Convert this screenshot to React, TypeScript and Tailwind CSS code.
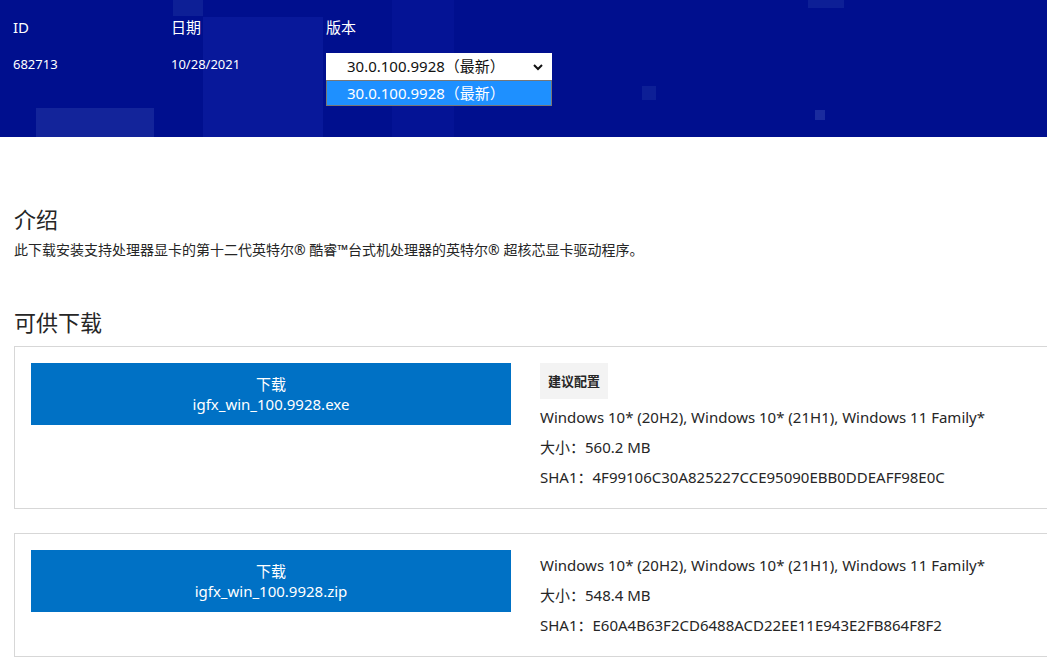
import React from "react";

const F = { fontFamily: '"Noto Sans","Noto Sans CJK SC",sans-serif' };

function Card({ file, rows, rec }: { file: string; rows: string[]; rec?: boolean }) {
  return (
    <div className="ml-[14px] w-[1100px] border border-[#d7d7d7] flex pt-4 pb-4 px-4">
      <div className="w-[480px] h-[62px] bg-[#0071c5] text-white text-[15px] leading-[20px] flex flex-col items-center justify-center shrink-0">
        <div>下载</div>
        <div>{file}</div>
      </div>
      <div className="ml-[29px] text-[15px] text-[#262626] leading-[30px]">
        {rec && (
          <div className="inline-block bg-[#f3f3f3] px-2 py-[3px] text-[13px] font-bold leading-[30px] mb-[3px]">建议配置</div>
        )}
        {rows.map((r) => (
          <div key={r}>{r}</div>
        ))}
      </div>
    </div>
  );
}

export default function App() {
  return (
    <div style={F} className="w-[1047px] h-[663px] overflow-hidden bg-white">
      <div className="relative h-[137px] bg-[#000f8e] text-white overflow-hidden">
        <div className="absolute left-[173px] top-0 w-[30px] h-[16px] bg-[#0d1f96]" />
        <div className="absolute left-[203px] top-[17px] w-[120px] h-[120px] bg-[#08189a]" />
        <div className="absolute left-[36px] top-[108px] w-[118px] h-[30px] bg-[#13249a]" />
        <div className="absolute left-[392px] top-0 w-[62px] h-[137px] bg-[#06169a] opacity-60" />
        <div className="absolute left-[808px] top-0 w-[36px] h-[8px] bg-[#0d1f96]" />
        <div className="absolute left-[642px] top-[86px] w-[14px] h-[14px] bg-[#0d1f96]" />
        <div className="absolute left-[815px] top-[110px] w-[10px] h-[10px] bg-[#1a2b9e]" />
        <div className="relative flex pl-[13px] pt-[16px]">
          <div className="w-[158px]">
            <div className="text-[15px] leading-[22px]">ID</div>
            <div className="text-[13px] mt-[17px]">682713</div>
          </div>
          <div className="w-[155px]">
            <div className="text-[15px] leading-[22px]">日期</div>
            <div className="text-[13px] mt-[17px]">10/28/2021</div>
          </div>
          <div>
            <div className="text-[15px] leading-[22px]">版本</div>
            <div className="mt-[15px] w-[226px] h-[27px] bg-white text-[#111] text-[15px] flex items-center pl-[21px] pr-2 justify-between">
              <span>30.0.100.9928（最新）</span>
              <svg width="12" height="12" viewBox="0 0 12 12"><path d="M2 4l4 4 4-4" stroke="#111" strokeWidth="2" fill="none" /></svg>
            </div>
            <div className="w-[226px] h-[26px] bg-[#1e90ff] border border-[#777] text-white text-[15px] flex items-center pl-[20px]">
              30.0.100.9928（最新）
            </div>
          </div>
        </div>
      </div>
      <div className="pl-[14px] pt-[67px] text-[#262626]">
        <div className="text-[22px] leading-[30px]">介绍</div>
        <div className="text-[14px] mt-[5px]">此下载安装支持处理器显卡的第十二代英特尔® 酷睿™台式机处理器的英特尔® 超核芯显卡驱动程序。</div>
        <div className="text-[22px] leading-[30px] mt-[47px]">可供下载</div>
      </div>
      <div className="mt-[9px]">
        <Card rec file="igfx_win_100.9928.exe" rows={["Windows 10* (20H2), Windows 10* (21H1), Windows 11 Family*", "大小：560.2 MB", "SHA1：4F99106C30A825227CCE95090EBB0DDEAFF98E0C"]} />
      </div>
      <div className="mt-[24px]">
        <Card file="igfx_win_100.9928.zip" rows={["Windows 10* (20H2), Windows 10* (21H1), Windows 11 Family*", "大小：548.4 MB", "SHA1：E60A4B63F2CD6488ACD22EE11E943E2FB864F8F2"]} />
      </div>
    </div>
  );
}
